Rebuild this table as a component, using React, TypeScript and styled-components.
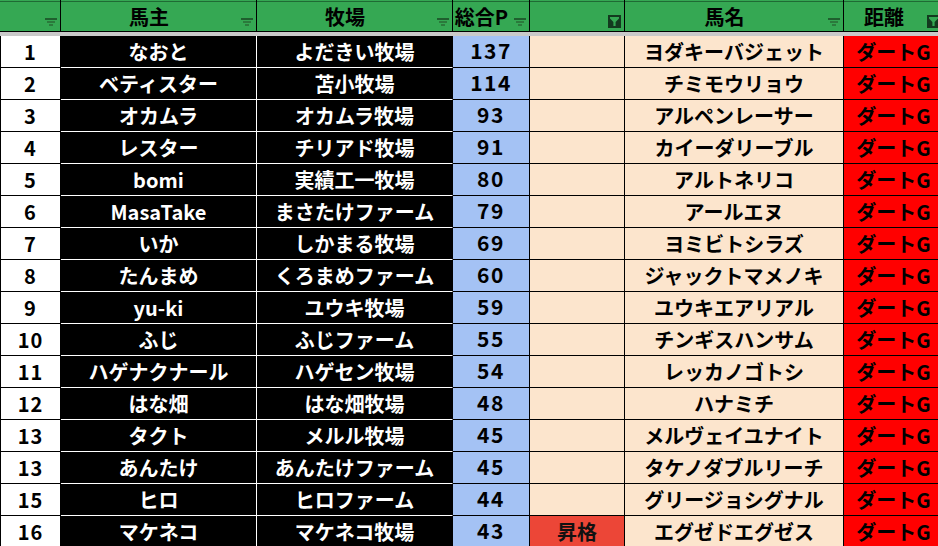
import React from "react"
import styled, { createGlobalStyle, css } from "styled-components"

const GlobalStyle = createGlobalStyle`
  html, body {
    margin: 0;
    padding: 0;
    overflow: hidden;
    background: #ffffff;
  }
  body {
    font-family: "Noto Sans CJK JP", "Noto Sans", sans-serif;
  }
`

const COLS = "61px 196px 196px 77px 95px 219px 100px"

type Row = {
  rank: number
  owner: string
  farm: string
  points: number
  note: string
  horse: string
}

const rows: Row[] = [
  { rank: 1, owner: "なおと", farm: "よだきい牧場", points: 137, note: "", horse: "ヨダキーバジェット" },
  { rank: 2, owner: "ベティスター", farm: "苫小牧場", points: 114, note: "", horse: "チミモウリョウ" },
  { rank: 3, owner: "オカムラ", farm: "オカムラ牧場", points: 93, note: "", horse: "アルペンレーサー" },
  { rank: 4, owner: "レスター", farm: "チリアド牧場", points: 91, note: "", horse: "カイーダリーブル" },
  { rank: 5, owner: "bomi", farm: "実績工一牧場", points: 80, note: "", horse: "アルトネリコ" },
  { rank: 6, owner: "MasaTake", farm: "まさたけファーム", points: 79, note: "", horse: "アールエヌ" },
  { rank: 7, owner: "いか", farm: "しかまる牧場", points: 69, note: "", horse: "ヨミビトシラズ" },
  { rank: 8, owner: "たんまめ", farm: "くろまめファーム", points: 60, note: "", horse: "ジャックトマメノキ" },
  { rank: 9, owner: "yu-ki", farm: "ユウキ牧場", points: 59, note: "", horse: "ユウキエアリアル" },
  { rank: 10, owner: "ふじ", farm: "ふじファーム", points: 55, note: "", horse: "チンギスハンサム" },
  { rank: 11, owner: "ハゲナクナール", farm: "ハゲセン牧場", points: 54, note: "", horse: "レッカノゴトシ" },
  { rank: 12, owner: "はな畑", farm: "はな畑牧場", points: 48, note: "", horse: "ハナミチ" },
  { rank: 13, owner: "タクト", farm: "メルル牧場", points: 45, note: "", horse: "メルヴェイユナイト" },
  { rank: 13, owner: "あんたけ", farm: "あんたけファーム", points: 45, note: "", horse: "タケノダブルリーチ" },
  { rank: 15, owner: "ヒロ", farm: "ヒロファーム", points: 44, note: "", horse: "グリージョシグナル" },
  { rank: 16, owner: "マケネコ", farm: "マケネコ牧場", points: 43, note: "昇格", horse: "エグゼドエグゼス" },
]

const headers: { label: string; active: boolean }[] = [
  { label: "", active: false },
  { label: "馬主", active: false },
  { label: "牧場", active: false },
  { label: "総合P", active: false },
  { label: "", active: true },
  { label: "馬名", active: false },
  { label: "距離", active: true },
]

const Sheet = styled.div`
  width: 944px;
`

const HeaderRow = styled.div`
  display: grid;
  grid-template-columns: ${COLS};
  height: 32px;
  background: #35a853;
  box-shadow: inset 0 1px 0 #35a853, inset 0 2px 0 #1f6b34;
`

const HeaderCell = styled.div`
  display: flex;
  align-items: center;
  box-sizing: border-box;
  height: 32px;
  padding-top: 2px;
  border-right: 1px solid #000;
  border-bottom: 1px solid #000;
`

const HeaderLabel = styled.span`
  flex: 1;
  text-align: center;
  font-size: 20px;
  font-weight: 700;
  color: #000;
  white-space: nowrap;
  line-height: 28px;
`

const FilterSlot = styled.div<{ $active: boolean }>`
  width: 19px;
  align-self: flex-end;
  display: flex;
  justify-content: flex-end;
  padding-right: 3px;
  box-sizing: border-box;
  margin-bottom: ${(p) => (p.$active ? "3px" : "5px")};
`

const FilterButton = styled.div`
  width: 13px;
  height: 13px;
  background: #133a1f;
  display: flex;
  align-items: center;
  justify-content: center;
`

const FrozenBar = styled.div`
  height: 4px;
  background: #c9c9c9;
`

const BodyRow = styled.div`
  display: grid;
  grid-template-columns: ${COLS};
  height: 32px;
`

type Kind = "rank" | "dark" | "darkEnd" | "blue" | "peach" | "promo" | "red"

const kindStyles: Record<Kind, ReturnType<typeof css>> = {
  rank: css`
    background: #ffffff;
    color: #000;
    border-left: 1px solid #000;
    font-size: 20px;
    letter-spacing: 1px;
  `,
  dark: css`
    background: #000;
    color: #fff;
    border-right-color: #fff;
    border-bottom-color: #fff;
  `,
  darkEnd: css`
    background: #000;
    color: #fff;
    border-bottom-color: #fff;
  `,
  blue: css`
    background: #a4c2f4;
    color: #000;
    font-size: 21px;
    letter-spacing: 1.5px;
    line-height: 29px;
  `,
  peach: css`
    background: #fce5cd;
    color: #000;
  `,
  promo: css`
    background: #ec4637;
    color: #111;
  `,
  red: css`
    background: #ff0000;
    color: #000;
  `,
}

const Cell = styled.div<{ $kind: Kind }>`
  box-sizing: border-box;
  height: 32px;
  border-right: 1px solid #000;
  border-bottom: 1px solid #000;
  font-size: 20px;
  font-weight: 700;
  line-height: 31px;
  text-align: center;
  white-space: nowrap;
  ${(p) => kindStyles[p.$kind]}
`

const IdleFilter = () => (
  <svg width="12" height="8" viewBox="0 0 12 8">
    <rect x="0" y="0" width="12" height="2" fill="#1f5f2e" />
    <rect x="2" y="3" width="8" height="2" fill="#2b7a3c" />
    <rect x="4" y="6" width="4" height="2" fill="#2b7a3c" />
  </svg>
)

const ActiveFilter = () => (
  <FilterButton>
    <svg width="9" height="9" viewBox="0 0 9 9">
      <path d="M0 0 H9 V1.5 L5.6 5 V9 H3.4 V5 L0 1.5 Z" fill="#35a853" />
    </svg>
  </FilterButton>
)

export default function App() {
  return (
    <>
      <GlobalStyle />
      <Sheet>
        <HeaderRow>
          {headers.map((h, i) => (
            <HeaderCell key={i}>
              <HeaderLabel>{h.label}</HeaderLabel>
              <FilterSlot $active={h.active}>
                {h.active ? <ActiveFilter /> : <IdleFilter />}
              </FilterSlot>
            </HeaderCell>
          ))}
        </HeaderRow>
        <FrozenBar />
        {rows.map((r, i) => (
          <BodyRow key={i}>
            <Cell $kind="rank">{r.rank}</Cell>
            <Cell $kind="dark">{r.owner}</Cell>
            <Cell $kind="darkEnd">{r.farm}</Cell>
            <Cell $kind="blue">{r.points}</Cell>
            <Cell $kind={r.note ? "promo" : "peach"}>{r.note}</Cell>
            <Cell $kind="peach">{r.horse}</Cell>
            <Cell $kind="red">ダートG</Cell>
          </BodyRow>
        ))}
      </Sheet>
    </>
  )
}
